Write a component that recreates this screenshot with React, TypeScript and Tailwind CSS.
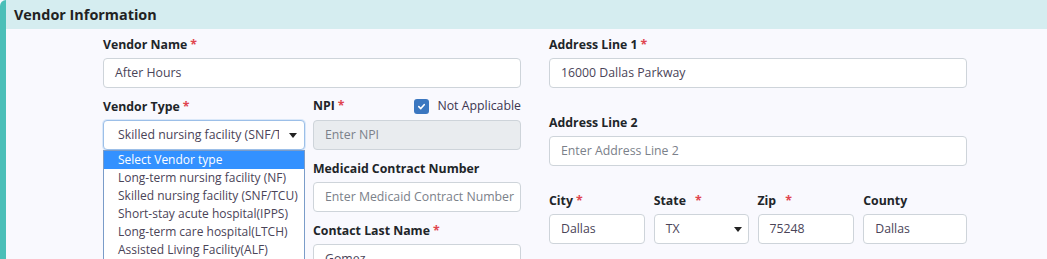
import React from "react";

const font = { fontFamily: '"Open Sans", "Noto Sans", sans-serif' };

function Star() {
  return <span className="ml-[3px] text-[#e0454f]">*</span>;
}

function Label({ text, required, className = "" }: { text: string; required?: boolean; className?: string }) {
  return (
    <div className={`h-[21px] leading-[21px] text-[12.3px] font-bold text-[#212529] mb-[3px] whitespace-nowrap ${className}`}>
      {text}
      {required && <Star />}
    </div>
  );
}

function Input({ value, placeholder, disabled }: { value?: string; placeholder?: string; disabled?: boolean }) {
  return (
    <div
      className={`h-[30px] rounded-[4px] border border-[#ced4da] px-[11px] flex items-center text-[12.3px] overflow-hidden whitespace-nowrap ${
        disabled ? "bg-[#e9ecef]" : "bg-white"
      } ${value ? "text-[#4a4458]" : "text-[#7b818a]"}`}
    >
      {value ?? placeholder}
    </div>
  );
}

function Caret() {
  return <span className="w-0 h-0 border-l-[4px] border-r-[4px] border-t-[5px] border-l-transparent border-r-transparent border-t-[#222]" />;
}

const vendorTypes = [
  "Select Vendor type",
  "Long-term nursing facility (NF)",
  "Skilled nursing facility (SNF/TCU)",
  "Short-stay acute hospital(IPPS)",
  "Long-term care hospital(LTCH)",
  "Assisted Living Facility(ALF)",
];

export default function App() {
  return (
    <div className="h-[259px] w-[1047px] overflow-hidden bg-[#f9f9fe]" style={font}>
      <div className="flex h-full">
        <div className="w-[6px] shrink-0 bg-[#4bbfb8] rounded-tl-[6px]" />
        <div className="flex-1 flex flex-col min-h-0">
          <div className="h-[29px] shrink-0 bg-[#d5edf0] pl-[8px] flex items-center text-[14.4px] font-bold text-[#222]">
            Vendor Information
          </div>
          <div className="flex shrink-0 pl-[97px] pt-[5px] gap-[28px]">
            {/* left column */}
            <div className="w-[418px]">
              <Label text="Vendor Name" required />
              <Input value="After Hours" />
              <div className="flex gap-[8px] mt-[8px]">
                <div className="w-[202px] relative">
                  <Label text="Vendor Type" required />
                  <div className="h-[30px] rounded-[4px] border border-[#9cbfe8] shadow-[0_0_0_1px_rgba(160,200,240,0.35)] bg-white pl-[14px] pr-[7px] flex items-center text-[12.3px] text-[#4a4458]">
                    <span className="flex-1 overflow-hidden whitespace-nowrap">Skilled nursing facility (SNF/TCU)</span>
                    <span className="ml-[10px] flex items-center">
                      <Caret />
                    </span>
                  </div>
                  <div className="absolute left-0 top-[54px] w-[202px] bg-white border border-[#7a9cc9] z-10">
                    {vendorTypes.map((t, i) => (
                      <div
                        key={t}
                        className={`h-[18px] leading-[18px] pl-[14px] text-[12px] whitespace-nowrap ${
                          i === 0 ? "bg-[#3391ff] text-white" : "text-[#4a4458]"
                        }`}
                      >
                        {t}
                      </div>
                    ))}
                  </div>
                </div>
                <div className="w-[208px]">
                  <div className="flex items-center justify-between h-[21px] mb-[3px]">
                    <span className="text-[12.3px] font-bold text-[#212529]">
                      NPI
                      <Star />
                    </span>
                    <span className="flex items-center gap-[8px] text-[12.3px] text-[#3d3650]">
                      <span className="w-[15px] h-[15px] rounded-[3px] bg-[#3b77c0] flex items-center justify-center">
                        <svg width="9" height="9" viewBox="0 0 10 10">
                          <path d="M2 5.2 L4.2 7.3 L8 3" stroke="white" strokeWidth="1.8" fill="none" strokeLinecap="round" strokeLinejoin="round" />
                        </svg>
                      </span>
                      Not Applicable
                    </span>
                  </div>
                  <Input placeholder="Enter NPI" disabled />
                  <div className="mt-[8px]">
                    <Label text="Medicaid Contract Number" />
                    <Input placeholder="Enter Medicaid Contract Number" />
                  </div>
                  <div className="mt-[8px]">
                    <Label text="Contact Last Name" required />
                    <Input value="Gomez" />
                  </div>
                </div>
              </div>
            </div>
            {/* right column */}
            <div className="w-[418px]">
              <Label text="Address Line 1" required />
              <Input value="16000 Dallas Parkway" />
              <div className="mt-[24px]">
                <Label text="Address Line 2" />
                <Input placeholder="Enter Address Line 2" />
              </div>
              <div className="mt-[24px] flex gap-[9px]">
                <div className="w-[96px]">
                  <Label text="City" required />
                  <Input value="Dallas" />
                </div>
                <div className="w-[95px]">
                  <Label text="State " required className="[&>span]:ml-[6px]" />
                  <div className="h-[30px] rounded-[4px] border border-[#ced4da] bg-white pl-[11px] pr-[6px] flex items-center justify-between text-[12.3px] text-[#4a4458]">
                    TX
                    <Caret />
                  </div>
                </div>
                <div className="w-[97px]">
                  <Label text="Zip " required className="[&>span]:ml-[6px]" />
                  <Input value="75248" />
                </div>
                <div className="w-[104px]">
                  <Label text="County" />
                  <Input value="Dallas" />
                </div>
              </div>
            </div>
          </div>
        </div>
      </div>
    </div>
  );
}
